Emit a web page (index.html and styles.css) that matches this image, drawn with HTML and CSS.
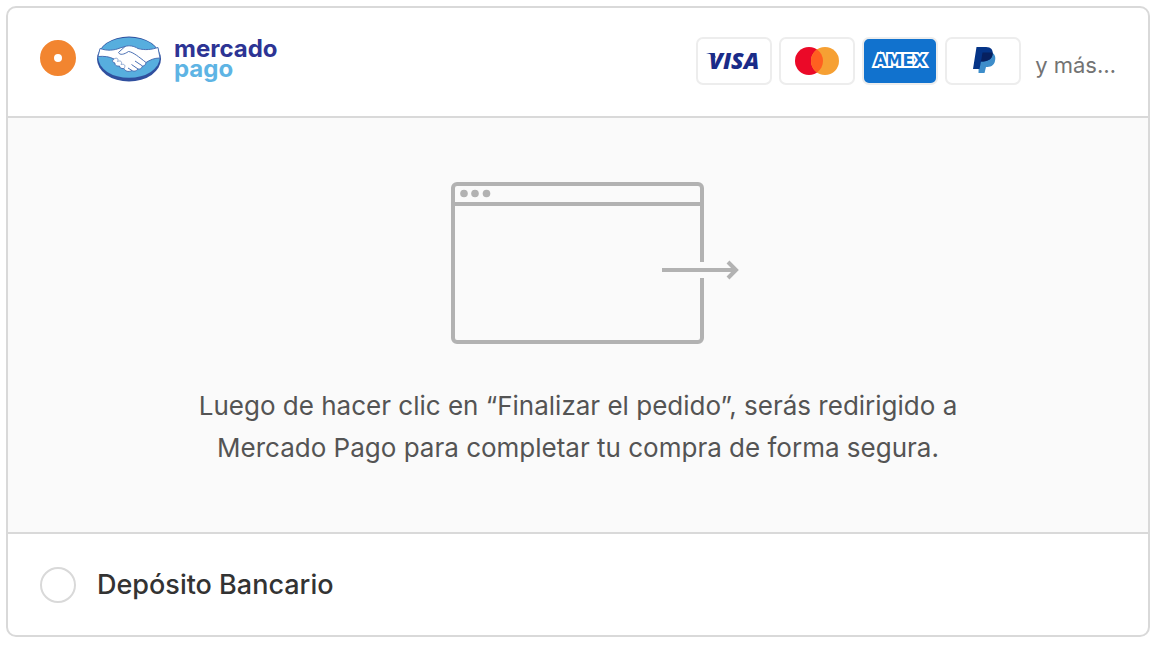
FILE: index.html
```html
<!DOCTYPE html>
<html lang="es">
<head>
<meta charset="utf-8">
<meta name="viewport" content="width=device-width, initial-scale=1">
<title>Pago</title>
<link rel="stylesheet" href="styles.css">
</head>
<body>
<form class="payment">
  <div class="option option-main">
    <input class="radio" type="radio" name="method" id="mercado-pago" checked>
    <label class="brand" for="mercado-pago">
      <svg class="brand-mark" viewBox="0 0 64 46" aria-hidden="true">
        <ellipse cx="32" cy="23" rx="32" ry="22.5" fill="#2f4f9e"/>
        <ellipse cx="32" cy="21.6" rx="30.8" ry="20.2" fill="#57aede"/>
        <path d="M3 12.5C10 15 17 14.500 23 12L28 10.500C32 9 37 10 41 12.500C48 14.500 55 13.500 61 11.500L63 22C57 22 53 24 49 26.500C49 29 47 30 45.500 30C45 32.500 42.500 33.500 41 33C39 35.500 36.500 35.500 35 34.500C31 36.500 28 35 27 32.500C24 33 22.500 31.500 22.500 30C19.500 30.500 17.500 29 18 27C15 26.500 15 24 17 23C12 20.500 7 20 1 20.500Z" fill="#fff" stroke="#4a70b4" stroke-width="1"/>
        <path d="M28 10.500L21.500 16.500C23 19.500 27 18.500 31.500 15.500C36 16 42 21 49 26.500M35 34.500L31 32M41 33L34.500 28.500M45.500 30L38 25" fill="none" stroke="#4a70b4" stroke-width="1"/>
        <path d="M17 23C20 21 22 23 20.500 25.500C24 24 25.500 26 24 28.500C27.500 27.500 29 29.500 27 32.500" fill="none" stroke="#8fa9d3" stroke-width="1"/>
      </svg>
      <span class="brand-name"><span class="brand-top">mercado</span><span class="brand-bottom">pago</span></span>
    </label>
    <div class="cards">
      <svg class="card" viewBox="0 0 72 44" role="img" aria-label="Visa">
        <text class="visa" x="36" y="30" text-anchor="middle">VISA</text>
        <path d="M8 14h8l2 5q-4-4-10-5z" fill="#1a2b88"/>
      </svg>
      <svg class="card" viewBox="0 0 72 44" role="img" aria-label="Mastercard">
        <circle cx="28" cy="22" r="14" fill="#eb0928"/>
        <circle cx="44" cy="22" r="14" fill="#f6a033"/>
        <path d="M36 10.500a14 14 0 0 1 0 23a14 14 0 0 1 0-23z" fill="#ff5f20"/>
      </svg>
      <svg class="card card-amex" viewBox="0 0 72 44" role="img" aria-label="American Express">
        <text class="amex" x="36" y="27" text-anchor="middle">AMEX</text>
      </svg>
      <svg class="card" viewBox="0 0 72 44" role="img" aria-label="PayPal">
        <path d="M32 13h11c5 1 6 5 5 9c-1 5-5 6-9 6l-1.500 6h-6z" fill="#3d8dca"/>
        <path d="M29.500 8H39c5 0 7.500 3 6.500 7.500C44.500 21 40.500 22.500 34 22.500L32.500 30H26z" fill="#053487"/>
        <path d="M34 22.500L35.500 13.500H45.700C46 20 41 22.500 34 22.500z" fill="#07205f"/>
      </svg>
      <span class="more">y más…</span>
    </div>
  </div>
  <div class="redirect">
    <svg class="window" viewBox="0 0 328 162" aria-hidden="true" fill="none" stroke="#b2b2b2" stroke-width="4">
      <path d="M288 80V6a4 4 0 0 0-4-4H43a4 4 0 0 0-4 4V156a4 4 0 0 0 4 4H284a4 4 0 0 0 4-4V96M39 22H288M248 88H322M314 80L322 88L314 96"/>
      <g fill="#b2b2b2" stroke="none"><circle cx="50" cy="11.500" r="3.800"/><circle cx="61" cy="11.500" r="3.800"/><circle cx="72.500" cy="11.500" r="3.800"/></g>
    </svg>
    <p class="message">Luego de hacer clic en “Finalizar el pedido”, serás redirigido a Mercado Pago para completar tu compra de forma segura.</p>
  </div>
  <div class="option">
    <input class="radio" type="radio" name="method" id="deposito">
    <label class="option-label" for="deposito">Depósito Bancario</label>
  </div>
</form>
</body>
</html>
```
FILE: styles.css
```css
* {
  box-sizing: border-box;
}

body {
  margin: 0;
  padding: 6px 8px 8px 6px;
  background: #fff;
  font-family: Inter, "Liberation Sans", sans-serif;
}

.payment {
  border: 2px solid #d9d9d9;
  border-radius: 10px;
  overflow: hidden;
}

.option {
  display: flex;
  align-items: center;
  gap: 21px;
  padding: 32px 32px 31px;
}

.option-main {
  padding: 28px 32px 30px;
}

.option-main .radio {
  margin-bottom: 6px;
}

.radio {
  appearance: none;
  flex: none;
  width: 36px;
  height: 36px;
  margin: 0;
  border: 2px solid #d9d9d9;
  border-radius: 50%;
  background: #fff;
}

.radio:checked {
  border: 14px solid #f28530;
}

.brand {
  display: flex;
  align-items: center;
  gap: 13px;
  margin-bottom: 4px;
}

.brand-mark {
  width: 64px;
  height: 46px;
}

.brand-name {
  display: flex;
  flex-direction: column;
  font-size: 24px;
  font-weight: 700;
  line-height: 20px;
}

.brand-top {
  color: #2d3494;
}

.brand-bottom {
  color: #5eb4e4;
}

.cards {
  display: flex;
  align-items: center;
  gap: 7px;
  margin-left: auto;
}

.card {
  width: 76px;
  height: 48px;
  border: 2px solid #ededed;
  border-radius: 7px;
}

.card-amex {
  background: #1172ce;
}

.visa {
  fill: #1a2b88;
  font: italic 800 23px "Open Sans", sans-serif;
}

.amex {
  fill: #1172ce;
  stroke: #fff;
  stroke-width: 4px;
  paint-order: stroke;
  font: 700 16px "DejaVu Sans", sans-serif;
}

.more {
  margin-left: 7px;
  padding-top: 7px;
  color: #737373;
  font-size: 22px;
  line-height: 30px;
}

.redirect {
  display: flex;
  flex-direction: column;
  align-items: center;
  gap: 41px;
  padding: 64px 32px 63px;
  border-block: 2px solid #d9d9d9;
  background: #fafafa;
}

.window {
  width: 328px;
  height: 162px;
}

.message {
  max-width: 780px;
  margin: 0;
  color: #545454;
  font-size: 26px;
  line-height: 42px;
  text-align: center;
}

.option-label {
  color: #333;
  font-size: 27px;
  font-weight: 500;
  line-height: 38px;
}
```
